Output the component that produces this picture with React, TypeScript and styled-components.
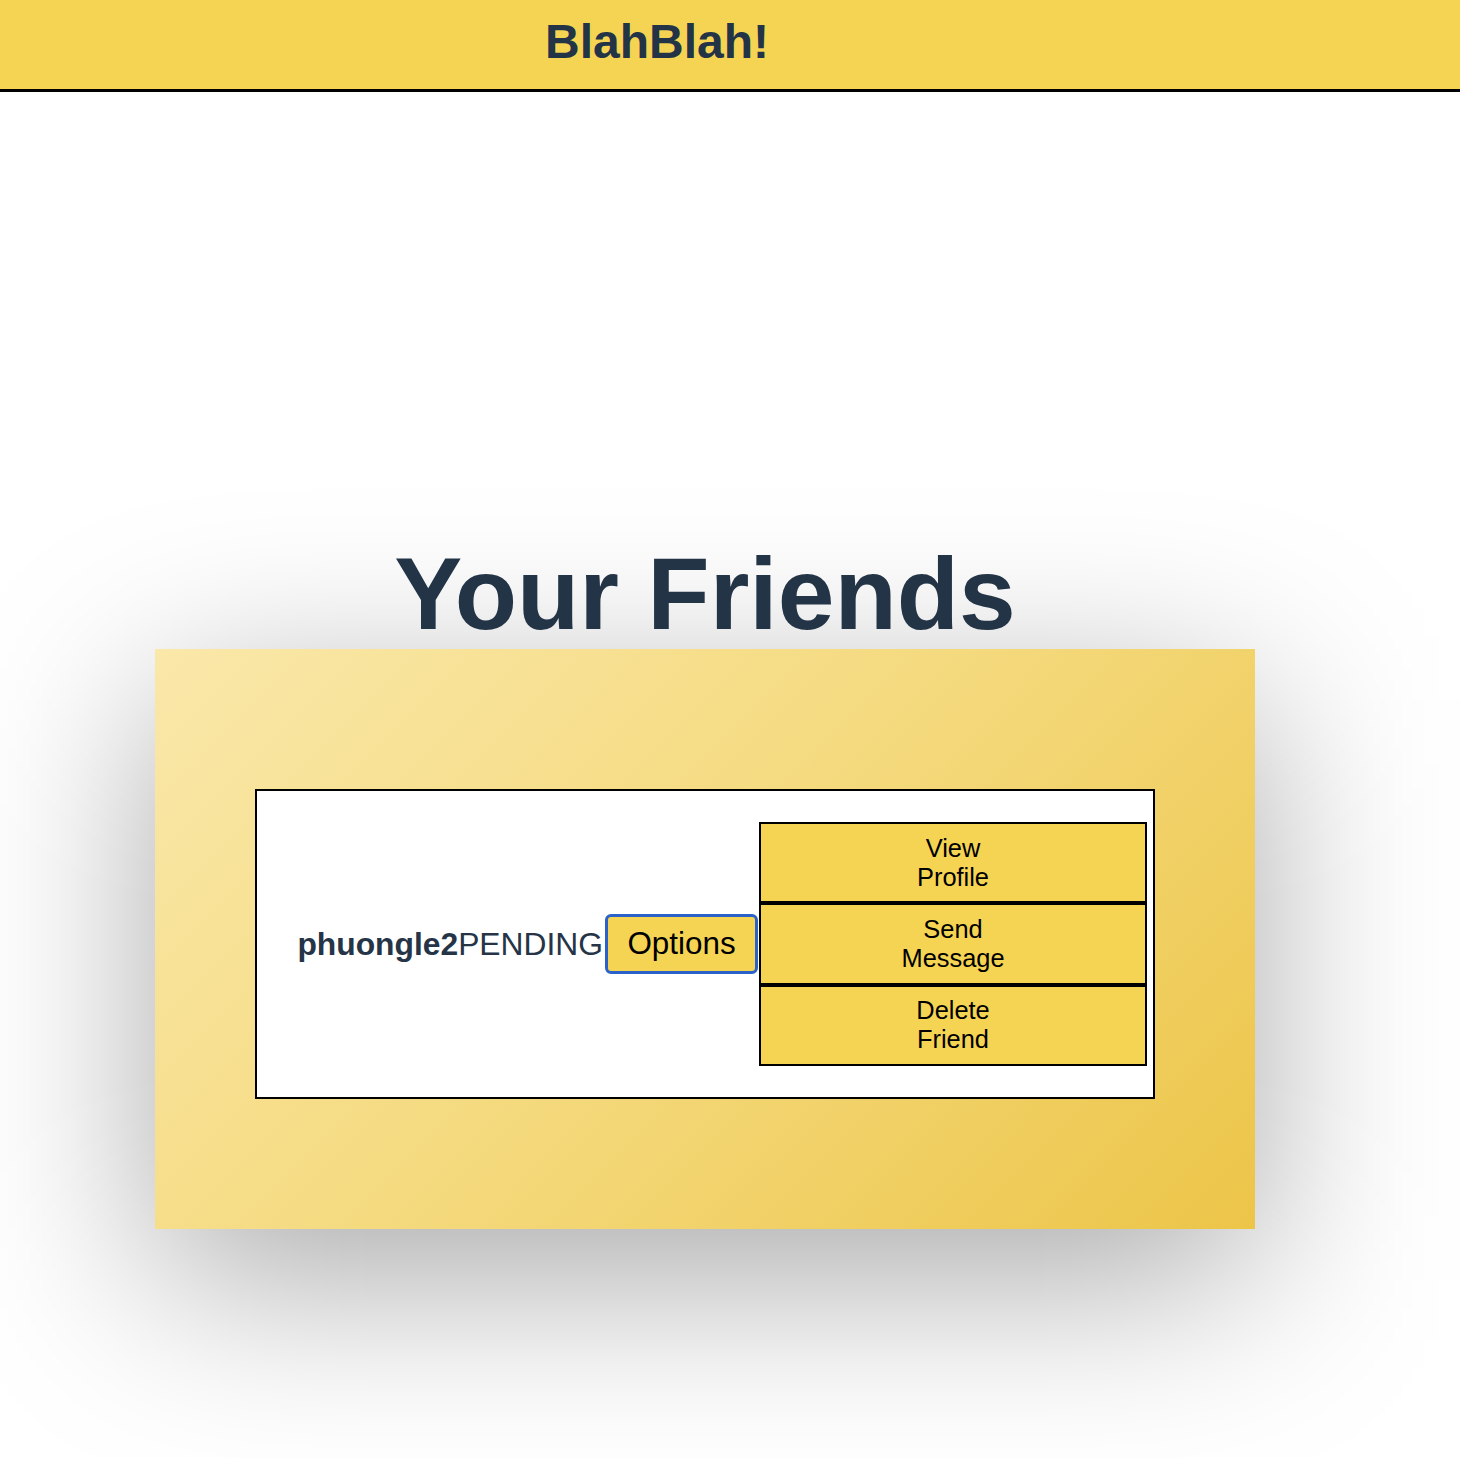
import styled, { createGlobalStyle } from "styled-components";

const GlobalStyle = createGlobalStyle`
  html {
    background: #ffffff;
  }
  body {
    margin: 0;
    padding: 0;
    min-height: 1458px;
    font-family: "Liberation Sans", Arial, Helvetica, sans-serif;
  }
`;

const Header = styled.header`
  padding: 14px 0 0 545px;
  box-sizing: border-box;
  height: 92px;
  background-color: #f6d453;
  border-bottom: 3px solid #000000;
`;

const Logo = styled.div`
  font-size: 48px;
  font-weight: 700;
  color: #243447;
  line-height: normal;
`;

const Main = styled.main`
  width: 1410px;
  min-height: 1366px;
  box-sizing: border-box;
  padding-top: 444px;
  display: flex;
  flex-direction: column;
  align-items: center;
`;

const Heading = styled.h1`
  margin: 0 0 -4px;
  font-size: 102px;
  font-weight: 700;
  color: #243447;
  line-height: normal;
`;

const Card = styled.section`
  position: relative;
  width: 1100px;
  height: 580px;
  box-sizing: border-box;
  padding: 140px 100px 130px;
  background: linear-gradient(135deg, #fae8aa 0%, #f4d97c 50%, #ecc548 100%);

  /* soft drop shadow under the card */
  &::before {
    content: "";
    position: absolute;
    inset: 0;
    transform: translateY(50px);
    background: rgba(0, 0, 0, 0.34);
    filter: blur(95px);
    z-index: -1;
  }
`;

const FriendRow = styled.div`
  height: 310px;
  box-sizing: border-box;
  border: 2px solid #000000;
  background: #ffffff;
  display: flex;
  align-items: center;
  justify-content: flex-end;
  padding: 0 6px;
`;

const Name = styled.span`
  font-size: 31.8px;
  color: #253447;
  white-space: nowrap;
  margin-right: 2px;
`;

const UserName = styled.b`
  font-weight: 700;
`;

const OptionsButton = styled.button`
  font-family: inherit;
  font-size: 31.4px;
  color: #000000;
  background-color: #f6d453;
  border: 3px solid #2b62c9;
  border-radius: 6px;
  height: 60px;
  width: 153px;
  padding: 0;
  margin-right: 1px;
  cursor: pointer;
`;

const Menu = styled.div`
  width: 388px;
  display: flex;
  flex-direction: column;
`;

const MenuItem = styled.button`
  font-family: inherit;
  font-size: 25.4px;
  line-height: 29px;
  color: #000000;
  background-color: #f6d453;
  border: 2px solid #000000;
  height: 81.4px;
  padding: 0;
  text-align: center;
  cursor: pointer;
`;

const menuItems = [
  ["View", "Profile"],
  ["Send", "Message"],
  ["Delete", "Friend"],
];

export default function App() {
  return (
    <>
      <GlobalStyle />
      <Header>
        <Logo>BlahBlah!</Logo>
      </Header>
      <Main>
        <Heading>Your Friends</Heading>
        <Card>
          <FriendRow>
            <Name>
              <UserName>phuongle2</UserName>PENDING
            </Name>
            <OptionsButton>Options</OptionsButton>
            <Menu>
              {menuItems.map(([a, b]) => (
                <MenuItem key={a}>
                  {a}
                  <br />
                  {b}
                </MenuItem>
              ))}
            </Menu>
          </FriendRow>
        </Card>
      </Main>
    </>
  );
}
